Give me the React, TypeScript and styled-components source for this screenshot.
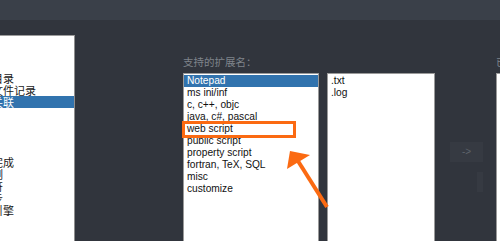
import React from 'react';
import styled, {createGlobalStyle} from "styled-components";

const GlobalStyle = createGlobalStyle`
  html, body {
    margin: 0;
    padding: 0;
    background: #31353d;
    overflow: hidden;
  }
`

const Page = styled.div`
  position: relative;
  width: 500px;
  height: 241px;
  background: #31353d;
  display: flex;
  flex-direction: column;
  overflow: hidden;
`

const TopBar = styled.div`
  height: 20px;
  background: #3a4049;
  flex: none;
`

const Main = styled.div`
  flex: 1;
  display: flex;
  align-items: stretch;
`

const CategoryPanel = styled.div`
  width: 74px;
  margin-top: 15px;
  background: #fff;
  border-top: 1px solid #9c9c9c;
  border-right: 1px solid #8e8e8e;
  overflow: hidden;
  flex: none;
`

// the list is scrolled sideways, so the start of each label is hidden
const CategoryList = styled.div`
  margin-left: -30px;
  width: calc(100% + 30px);
`

const CategoryRow = styled.div<{ $selected?: boolean }>`
  height: 12px;
  line-height: 12px;
  font-family: "Noto Sans CJK SC", sans-serif;
  font-size: 11px;
  white-space: nowrap;
  overflow: hidden;
  color: ${p => p.$selected ? '#fff' : '#1a1a1a'};
  background: ${p => p.$selected ? '#3173ae' : 'transparent'};
`

const Column = styled.div<{ $gap: number, $width: number }>`
  margin-left: ${p => p.$gap}px;
  width: ${p => p.$width}px;
  display: flex;
  flex-direction: column;
  flex: none;
`

const Label = styled.div`
  margin-top: 36px;
  height: 12px;
  line-height: 12px;
  font-family: "Noto Sans CJK SC", sans-serif;
  font-size: 10.5px;
  color: #7f848b;
  white-space: nowrap;
  margin-bottom: 5px;
`

const ListBox = styled.div`
  position: relative;
  flex: 1;
  background: #fff;
  border: 1px solid #9a9a9a;
  border-bottom: none;
  padding-top: 1px;
`

const ListRow = styled.div<{ $selected?: boolean }>`
  height: 12px;
  line-height: 12px;
  padding-left: 3px;
  font-family: "Liberation Sans", Arial, sans-serif;
  font-size: 10.2px;
  white-space: nowrap;
  color: ${p => p.$selected ? '#fff' : '#111'};
  background: ${p => p.$selected ? '#3173ae' : 'transparent'};
`

const Highlight = styled.div`
  position: absolute;
  left: -2px;
  top: 47px;
  width: 108px;
  height: 11px;
  border: 3px solid #fb6a12;
`

const ButtonColumn = styled.div`
  margin-left: 15px;
  padding-top: 122px;
  display: flex;
  flex-direction: column;
  gap: 10px;
  flex: none;
`

const MoveButton = styled.div<{ $dim?: boolean }>`
  width: 33px;
  height: 20px;
  line-height: 20px;
  text-align: center;
  font-family: "Liberation Sans", Arial, sans-serif;
  font-size: 10px;
  color: ${p => p.$dim ? '#31353d' : '#5d626a'};
  background: ${p => p.$dim ? '#31353d' : '#363a42'};
  box-shadow: ${p => p.$dim ? 'inset -6px 0 0 #363a42' : 'none'};
`

const Arrow = styled.svg`
  position: absolute;
  left: 0;
  top: 0;
  pointer-events: none;
`

const categories = [
    '常用', '编辑', '新建', '默认目录', '最近文件记录', '文件关联', '语言', '高亮',
    '打印', '备份', '自动完成', '多实例', '分隔符', '云同步', '搜索引擎', '其他'
];

const languages = [
    'Notepad', 'ms ini/inf', 'c, c++, objc', 'java, c#, pascal', 'web script',
    'public script', 'property script', 'fortran, TeX, SQL', 'misc', 'customize'
];

const extensions = ['.txt', '.log'];

export default function App() {
    return (
        <Page>
            <GlobalStyle/>
            <TopBar/>
            <Main>
                <CategoryPanel>
                    <CategoryList>
                        {categories.map(c => (
                            <CategoryRow key={c} $selected={c === '文件关联'}>{c}</CategoryRow>
                        ))}
                    </CategoryList>
                </CategoryPanel>
                <Column $gap={108} $width={136}>
                    <Label>支持的扩展名：</Label>
                    <ListBox>
                        {languages.map((l, i) => (
                            <ListRow key={l} $selected={i === 0}>{l}</ListRow>
                        ))}
                        <Highlight/>
                    </ListBox>
                </Column>
                <Column $gap={8} $width={108}>
                    <Label/>
                    <ListBox>
                        {extensions.map(e => <ListRow key={e}>{e}</ListRow>)}
                    </ListBox>
                </Column>
                <ButtonColumn>
                    <MoveButton>-&gt;</MoveButton>
                    <MoveButton $dim>&lt;-</MoveButton>
                </ButtonColumn>
                <Column $gap={13} $width={120}>
                    <Label>已注册的扩展名：</Label>
                    <ListBox/>
                </Column>
            </Main>
            <Arrow width="500" height="241" viewBox="0 0 500 241">
                <line x1="298" y1="161" x2="327" y2="207" stroke="#fb6a12" strokeWidth="4"/>
                <polygon points="290,151 310,155 287,169" fill="#fb6a12"/>
            </Arrow>
        </Page>
    );
}
